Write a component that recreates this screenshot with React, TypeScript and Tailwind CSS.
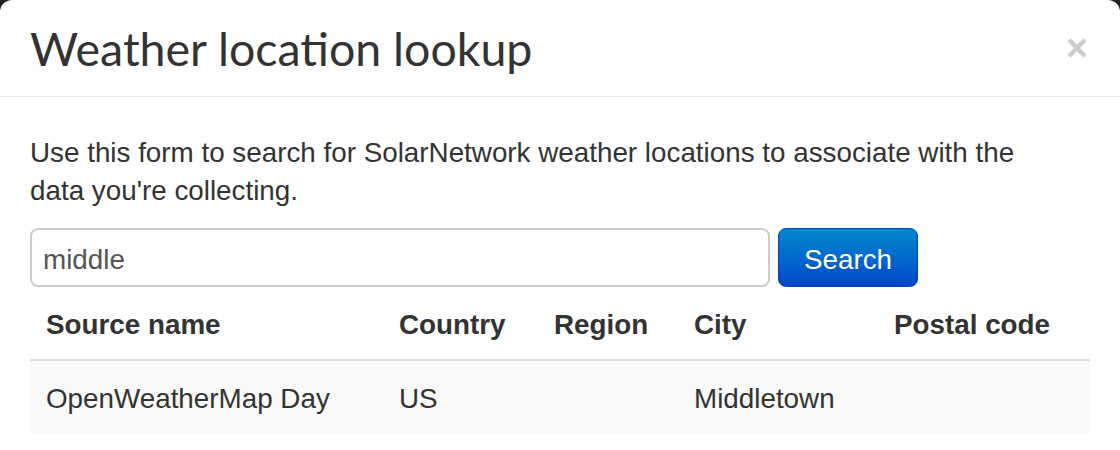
const rows = [
  { source: "OpenWeatherMap Day", country: "US", region: "", city: "Middletown", postal: "" },
];

const cols = "grid grid-cols-[353px_155px_140px_200px_212px]";

export default function App() {
  return (
    <div className="w-[1120px] h-[450px] bg-[#1e1e1e] overflow-hidden font-['Liberation_Sans',Arial,sans-serif] text-[#333]">
      <div className="bg-white rounded-t-[12px] h-full">
        {/* Header */}
        <div className="h-[97px] border-b border-[#e5e5e5] pl-[30px] pr-[30px] flex items-center justify-between">
          <h3 className="font-['Lato','Noto_Sans',sans-serif] text-[46.5px] leading-[50px] text-[#333]">
            Weather location lookup
          </h3>
          <button className="text-[38px] leading-[38px] font-bold text-[#cccccc] mr-[2px]">×</button>
        </div>

        {/* Body */}
        <div className="px-[30px] pt-[37px]">
          <p className="text-[27.8px] leading-[38px] max-w-[1040px]">
            Use this form to search for SolarNetwork weather locations to associate with the data you're collecting.
          </p>

          <div className="flex gap-[8px] mt-[18px]">
            <input
              defaultValue="middle"
              className="w-[740px] h-[59px] border-2 border-[#cccccc] rounded-[8px] px-[11px] pt-[5px] text-[27.8px] text-[#555] outline-none bg-white"
            />
            <button className="w-[140px] h-[59px] rounded-[8px] bg-gradient-to-b from-[#0088cc] to-[#0044cc] text-white text-[27.8px] pt-[5px] border border-[#0044aa]">
              Search
            </button>
          </div>

          <div className="w-[1060px]">
            <div className={`${cols} h-[74px] items-center pt-[4px] font-bold text-[27.8px] border-b-2 border-[#dddddd]`}>
              <div className="px-[16px]">Source name</div>
              <div className="px-[16px]">Country</div>
              <div className="px-[16px]">Region</div>
              <div className="px-[16px]">City</div>
              <div className="px-[16px]">Postal code</div>
            </div>
            {rows.map((r) => (
              <div key={r.source} className={`${cols} h-[73px] items-center pt-[3px] text-[27.8px] bg-[#f9f9f9]`}>
                <div className="px-[16px]">{r.source}</div>
                <div className="px-[16px]">{r.country}</div>
                <div className="px-[16px]">{r.region}</div>
                <div className="px-[16px]">{r.city}</div>
                <div className="px-[16px]">{r.postal}</div>
              </div>
            ))}
          </div>
        </div>
      </div>
    </div>
  );
}
